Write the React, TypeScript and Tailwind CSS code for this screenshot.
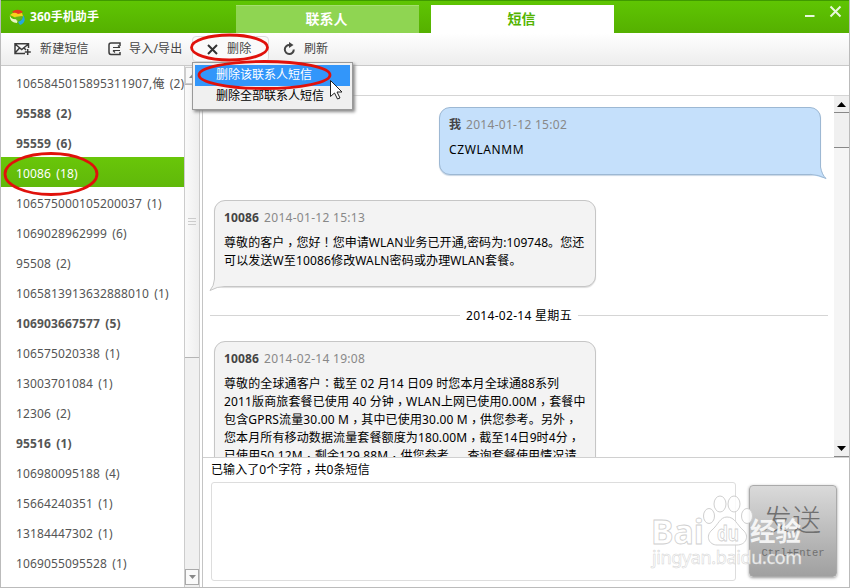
import React from "react";
import clsx from "clsx";

const threads = [
  { name: "1065845015895311907,俺", count: 2 },
  { name: "95588", count: 2, unread: true },
  { name: "95559", count: 6, unread: true },
  { name: "10086", count: 18, active: true },
  { name: "106575000105200037", count: 1 },
  { name: "1069028962999", count: 6 },
  { name: "95508", count: 2 },
  { name: "1065813913632888010", count: 1 },
  { name: "106903667577", count: 5, unread: true },
  { name: "106575020338", count: 1 },
  { name: "13003701084", count: 1 },
  { name: "12306", count: 2 },
  { name: "95516", count: 1, unread: true },
  { name: "106980095188", count: 4 },
  { name: "15664240351", count: 1 },
  { name: "13184447302", count: 1 },
  { name: "1069055095528", count: 1 },
];

// full-width marks sit in the middle of their cell, commas drop to the baseline
function Cn({ text }: { text: string }) {
  return (
    <>
      {text.split(/([，！：])/).map((part, i) =>
        i % 2 ? (
          <span
            key={i}
            className={clsx("font-['Noto_Sans_CJK_TC',sans-serif] leading-[0]", part === "，" && "relative top-[3px]")}
          >
            {part}
          </span>
        ) : (
          part
        )
      )}
    </>
  );
}

function TitleBar() {
  return (
    <header className="h-[33px] shrink-0 flex items-end border-t border-[#3f9a00] bg-gradient-to-b from-[#5fc503] to-[#55b000] text-white">
      <div className="w-[235px] h-full flex items-center pl-[8px]">
        <svg width="17" height="17" viewBox="0 0 17 17">
          <path d="M3 3C6 0 11 0 14 3L9 6Z" fill="#e8391d" />
          <path d="M1 6Q5 2 9 5l4-1 1 3-5 3Z" fill="#f5d21b" />
          <path d="M1 6c0 3 3 5 8 4l-1 4C4 14 0 11 1 6Z" fill="#e9f5c5" />
          <path d="M6 8l7-1 0 3-5 2Z" fill="#65b718" />
          <path d="M14 6c3 4 2 8-3 10l-2-3c3-1 5-3 5-7Z" fill="#25a7e0" />
        </svg>
        <span className="ml-1 text-[12px] font-bold tracking-[0.05px]">360手机助手</span>
      </div>
      <div className="w-[183px] h-7 flex items-center justify-center bg-[#8fd552] border-t border-[#a4df70] text-[14px] leading-5 font-bold pb-px pr-[2px]">
        联系人
      </div>
      <div className="ml-3 w-[183px] h-7 flex items-center justify-center bg-white text-[#54b400] text-[14px] leading-5 font-bold pb-px pr-[2px]">
        短信
      </div>
      <div className="flex-1 h-full flex justify-end">
        <svg width="44" height="30" viewBox="0 0 44 30" fill="none" stroke="#e9f8dd" strokeWidth="2">
          <path d="M-1 15h10.500" />
          <path d="M25.500 5.500l10 10M35.500 5.500l-10 10" />
        </svg>
      </div>
    </header>
  );
}

function Toolbar() {
  return (
    <div className="h-[33px] shrink-0 flex items-center border-b border-[#c9c9c9] bg-gradient-to-b from-white to-[#ededed] text-[12px] text-[#444]">
      <button className="w-[93px] pl-[13px] flex items-center whitespace-nowrap">
        <svg width="18" height="14" viewBox="0 0 18 14" fill="none" stroke="#3c3c3c" strokeWidth="1.5">
          <path d="M14.500 6V1.700H1V11.500h10M1 2l6.700 5.500L14.500 2M1 11l4.500-5M10 6l2 2M13.700 7v6M10.800 10h6" />
        </svg>
        <span className="ml-2 tracking-[0.2px]">新建短信</span>
      </button>
      <button className="w-[97px] pl-[14px] flex items-center whitespace-nowrap">
        <svg width="13" height="14" viewBox="0 0 13 14" fill="none" stroke="#3c3c3c" strokeWidth="1.5">
          <path d="M12 4V1H3Q1 1 1 3v7q0 2.500 2 2.500h9V10" />
          <path d="M5 5.500h7M10 3.500l2 2M12 8.500H5M7 10.500l-2-2" strokeWidth="1.200" />
        </svg>
        <span className="ml-2 tracking-[0.2px]">导入/导出</span>
      </button>
      <button className="w-[77px] h-[26px] ml-px pl-[14px] flex items-center border border-[#dcdcdc] rounded-sm bg-[#fafafa] whitespace-nowrap">
        <svg width="11" height="11" viewBox="0 0 11 11" stroke="#333" strokeWidth="2">
          <path d="M1 1l9 9M10 1l-9 9" />
        </svg>
        <span className="ml-[9px] tracking-[0.2px]">删除</span>
      </button>
      <button className="pl-[14px] flex items-center whitespace-nowrap">
        <svg width="13" height="14" viewBox="0 0 13 14" fill="none" stroke="#444" strokeWidth="2">
          <path d="M8 3H6.500A4.500 4.500 0 1 0 10.800 7.500" />
          <path d="M6 0l4.500 3L6 6Z" fill="#444" stroke="none" />
        </svg>
        <span className="ml-2">刷新</span>
      </button>
    </div>
  );
}

function ThreadList() {
  return (
    <aside className="w-[183px] shrink-0 pt-px overflow-hidden">
      {threads.map((t) => (
        <div
          key={t.name}
          className={clsx(
            "h-[30px] pl-[15px] leading-[34px] text-[12px] tracking-[0.14px] [word-spacing:2px] whitespace-nowrap",
            t.active
              ? "bg-gradient-to-b from-[#69c609] to-[#60b80a] text-white"
              : "text-[#555]",
            t.unread && "font-bold text-[#444]"
          )}
        >
          {t.name} ({t.count})
        </div>
      ))}
    </aside>
  );
}

function ListScrollbar() {
  return (
    <div className="w-4 shrink-0 flex flex-col bg-[#f0f0f0] border-x border-[#ccc] pb-[2px]">
      <div className="h-[17px] mt-px flex items-center justify-center border border-[#ccc] bg-[#f8f8f8]">
        <svg width="7" height="4">
          <path d="M0 4L3.500 0L7 4Z" fill="#888" />
        </svg>
      </div>
      <div className="h-[274px] flex flex-col items-center justify-center gap-[2px] border-y border-[#b5b5b5] bg-gradient-to-r from-[#fafafa] to-[#eee]">
        <i className="w-2 h-px bg-[#ccc]" />
        <i className="w-2 h-px bg-[#ccc]" />
        <i className="w-2 h-px bg-[#ccc]" />
      </div>
      <div className="mt-auto h-4 flex items-center justify-center border border-[#aaa] bg-[#fafafa]">
        <svg width="7" height="4">
          <path d="M0 0L3.500 4L7 0Z" fill="#888" />
        </svg>
      </div>
    </div>
  );
}

type BubbleProps = {
  sender: string;
  time: string;
  own?: boolean;
  className?: string;
  children: React.ReactNode;
};

function Bubble({ sender, time, own, className, children }: BubbleProps) {
  return (
    <div
      className={clsx(
        "relative shrink-0 w-[382px] rounded-[11px] border px-[9px] pt-[8px] text-[12px] whitespace-nowrap",
        own ? "bg-[#c5e0fb] border-[#9db8d3] shadow-[0_1px_1px_#c9d6e4]" : "bg-[#f3f3f3] border-[#c6c6c6] shadow-[0_1px_1px_#ddd]",
        className
      )}
    >
      <div className="leading-[18px]">
        <b className={clsx("text-[#444]", !own && "tracking-[0.15px]")}>{sender}</b>
        <span className="ml-[5px] text-[#888] tracking-[0.29px]">{time}</span>
      </div>
      <div className="mt-[7px] leading-[18px] text-black">{children}</div>
      {own ? (
        <svg className="absolute -right-[7px] -bottom-[6px]" width="16" height="17" viewBox="0 0 16 17">
          <path d="M0 0h9.500v4Q11 12 15 15.500Q8 14 0 11.500Z" fill="#c5e0fb" />
          <path d="M9.500 0v4Q11 12 15 15.500Q7 11.500 0 11.500" fill="#c5e0fb" stroke="#9db8d3" />
        </svg>
      ) : (
        <svg className="absolute -left-[6px] -bottom-[6px]" width="16" height="17" viewBox="0 0 16 17">
          <path d="M16 0H5.500v4Q5 11 1 15.500Q8 12 16 11.500Z" fill="#f3f3f3" />
          <path d="M5.500 0v4Q5 11 1 15.500Q8 11.500 16 11.500" fill="none" stroke="#c6c6c6" />
        </svg>
      )}
    </div>
  );
}

function Conversation() {
  return (
    <div className="h-[361px] shrink-0 flex">
      <div className="flex-1 flex flex-col overflow-hidden pt-[11px] pl-[7px]">
        <Bubble own sender="我" time="2014-01-12 15:02" className="h-[68px] ml-[229px]">
          <p className="tracking-[0.6px]">CZWLANMM</p>
        </Bubble>
        <Bubble sender="10086" time="2014-01-12 15:13" className="h-[87px] mt-[25px] ml-[4px]">
          <p className="tracking-[0.07px]"><Cn text="尊敬的客户，您好！您申请WLAN业务已开通,密码为:109748。您还" /></p>
          <p className="tracking-[0.14px]">可以发送W至10086修改WALN密码或办理WLAN套餐。</p>
        </Bubble>
        <div className="shrink-0 h-[18px] mt-[19px] mr-[6px] flex items-center gap-[6px] text-[12px] tracking-[0.3px]">
          <i className="w-[250px] h-px bg-[#d5d5d5]" />
          <span className="whitespace-nowrap pt-[2px]">2014-02-14 星期五</span>
          <i className="flex-1 h-px bg-[#d5d5d5]" />
        </div>
        <Bubble sender="10086" time="2014-02-14 19:08" className="h-[180px] mt-[17px] ml-[4px]">
          <p className="tracking-[0.11px]"><Cn text="尊敬的全球通客户：截至 02 月14 日09 时您本月全球通88系列" /></p>
          <p className="tracking-[0.14px]"><Cn text="2011版商旅套餐已使用 40 分钟，WLAN上网已使用0.00M，套餐中" /></p>
          <p className="tracking-[0.16px]"><Cn text="包含GPRS流量30.00 M，其中已使用30.00 M，供您参考。另外，" /></p>
          <p className="tracking-[0.12px]"><Cn text="您本月所有移动数据流量套餐额度为180.00M，截至14日9时4分，" /></p>
          <p className="tracking-[0.12px]"><Cn text={"已使用50.12M，剩余129.88M，供您参考。\u00a0 查询套餐使用情况请"} /></p>
        </Bubble>
      </div>
      <div className="w-[15px] flex flex-col bg-[#f5f5f5]">
        <div className="h-[17px] flex items-center justify-center bg-[#f0f0f0] border-b border-[#888]">
          <svg width="9" height="5">
            <path d="M0 5L4.500 0L9 5Z" />
          </svg>
        </div>
        <div className="h-[35px] bg-[#f0f0f0] border-b border-[#888]" />
        <div className="mt-auto h-[17px] flex items-center justify-center bg-[#f0f0f0] border-b border-[#888]">
          <svg width="9" height="5">
            <path d="M0 0L4.500 5L9 0Z" />
          </svg>
        </div>
      </div>
    </div>
  );
}

function Composer() {
  return (
    <div className="flex-1 flex flex-col border-t border-[#d0d0d0] pl-[8px]">
      <div className="h-6 leading-6 text-[12px] tracking-[0.07px] text-black">
        <Cn text="已输入了0个字符，共0条短信" />
      </div>
      <div className="flex">
        <div className="w-[525px] h-[99px] border border-[#ddd] rounded-[3px]" />
        <button className="ml-[13px] mt-[3px] w-[88px] h-[92px] flex flex-col items-center border border-[#aaa] rounded-[4px] bg-gradient-to-b from-[#dadada] to-[#a0a0a0] text-[#707070] shadow-[0_1px_3px_#999]">
          <span className="mt-[14px] mr-[2px] text-[29px] leading-[40px] font-light">发送</span>
          <span className="mt-[6px] font-['Liberation_Mono'] text-[10.5px] leading-[14px]">Ctrl+Enter</span>
        </button>
      </div>
    </div>
  );
}

function DeleteMenu() {
  return (
    <div className="absolute left-[192px] top-[62px] w-[161px] h-[48px] p-[2px] border border-[#999] bg-[#f0f0f0] shadow-[2px_2px_3px_#888] text-[12px] whitespace-nowrap">
      <div className="h-[21px] leading-[20px] pl-[21px] bg-[#3296fa] text-white">删除该联系人短信</div>
      <div className="h-[21px] leading-[20px] pl-[21px] text-black">删除全部联系人短信</div>
    </div>
  );
}

// red rings and the mouse pointer drawn over the window
function Annotations() {
  return (
    <svg className="absolute left-0 top-0 pointer-events-none" width="850" height="588" fill="none">
      <g stroke="#e0110b" strokeWidth="2.8">
        <ellipse cx="229.500" cy="47.500" rx="38" ry="12.500" />
        <ellipse cx="264.500" cy="75" rx="65.500" ry="13.500" />
        <ellipse cx="51" cy="174" rx="46" ry="20.500" />
      </g>
      <path d="M330.500 80.500v16l4-3.500 3 6 2.500-1-3-6h5Z" fill="#fff" stroke="#222" />
    </svg>
  );
}

function Watermark() {
  return (
    <svg className="absolute left-[640px] top-[490px] pointer-events-none" width="180" height="90">
      <g fill="#fff" fillOpacity="0.850" stroke="#cfcfcf" strokeWidth="1">
        <ellipse cx="69" cy="26" rx="5.500" ry="7.500" />
        <ellipse cx="80" cy="14" rx="6" ry="8" />
        <ellipse cx="94" cy="14" rx="6" ry="8" />
        <ellipse cx="107" cy="26" rx="5.500" ry="7.500" />
        <path d="M87 27c-7 0-9 8-15 13c-7 6-3 15 5 15h20c9 0 13-9 6-15c-6-5-8-13-16-13Z" />
      </g>
      <g fill="#fff" fillOpacity="0.850" stroke="#cfcfcf" strokeWidth="0.800" fontWeight="700">
        <text x="11" y="54" fontSize="34" textLength="53" lengthAdjust="spacingAndGlyphs">Bai</text>
        <text x="77" y="51" fontSize="21" textLength="22" lengthAdjust="spacingAndGlyphs">du</text>
        <text x="110" y="51" fontSize="26" textLength="51" lengthAdjust="spacingAndGlyphs" stroke="none">经验</text>
      </g>
      <text x="12" y="74" fontSize="18" fill="#fff" fillOpacity="0.900" stroke="#d2d2d2" strokeWidth="0.500" textLength="150">jingyan.baidu.com</text>
    </svg>
  );
}

export default function App() {
  return (
    <div className="relative w-[850px] h-[588px] flex flex-col overflow-hidden border-x border-b border-[#bbb] bg-white font-['Noto_Sans','Noto_Sans_CJK_SC',sans-serif]">
      <TitleBar />
      <Toolbar />
      <div className="flex-1 min-h-0 flex">
        <ThreadList />
        <ListScrollbar />
        <main className="flex-1 min-w-0 ml-[2px] flex flex-col border-l border-[#c4c4c4]">
          <div className="h-[30px] shrink-0 border-b border-[#d5d5d5]" />
          <Conversation />
          <Composer />
        </main>
      </div>
      <div className="absolute -left-px top-0">
        <DeleteMenu />
        <Annotations />
        <Watermark />
      </div>
    </div>
  );
}
